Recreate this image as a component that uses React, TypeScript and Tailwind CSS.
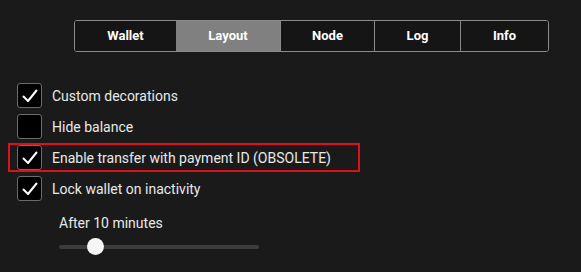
import React from 'react';

const tabs = [
  { label: 'Wallet', w: 'w-[101px]' },
  { label: 'Layout', w: 'w-[104px]', active: true },
  { label: 'Node', w: 'w-[94px]' },
  { label: 'Log', w: 'w-[86px]' },
  { label: 'Info', w: 'w-[88px]' },
];

const options = [
  { label: 'Custom decorations', checked: true },
  { label: 'Hide balance', checked: false },
  { label: 'Enable transfer with payment ID (OBSOLETE)', checked: true, highlight: true },
  { label: 'Lock wallet on inactivity', checked: true },
];

const Check = ({ checked }: { checked: boolean }) => (
  <div className="w-[25px] h-[25px] rounded-[3px] border border-[#6b6b6b] bg-black flex items-center justify-center shrink-0">
    {checked && (
      <svg width="16" height="14" viewBox="0 0 16 14" fill="none">
        <path d="M1.5 7.5 L6 12 L14.5 1.5" stroke="#fff" strokeWidth="2" strokeLinecap="round" strokeLinejoin="round" />
      </svg>
    )}
  </div>
);

const App = () => {
  return (
    <div className="w-[581px] h-[272px] bg-[#1a1a1a] text-[#e9e9e9] overflow-hidden" style={{ fontFamily: 'Roboto, "Liberation Sans", sans-serif' }}>
      {/* Tabs */}
      <div className="pt-[20px] pl-[74px]">
        <div className="flex w-max border border-[#8a8a8a] rounded-[3px] h-[32px] overflow-hidden">
          {tabs.map((t, i) => (
            <div
              key={t.label}
              className={`${t.w} flex items-center justify-center text-[13px] font-bold text-white ${
                t.active ? 'bg-[#808080]' : 'bg-[#151515]'
              } ${i > 1 ? 'border-l border-[#8a8a8a]' : ''}`}
            >
              {t.label}
            </div>
          ))}
        </div>
      </div>

      {/* Options */}
      <div className="mt-[31px] flex flex-col gap-[6px]">
        {options.map((o) => (
          <div
            key={o.label}
            className={`flex items-center gap-[10px] h-[25px] ${
              o.highlight ? 'ml-[10px] w-[348px] outline-2 outline-[#e0101a] pl-[7px]' : 'pl-[17px]'
            }`}
          >
            <Check checked={o.checked} />
            <span className="text-[14px] leading-none">{o.label}</span>
          </div>
        ))}
      </div>

      {/* Timeout */}
      <div className="pl-[59px] mt-[15px]">
        <div className="text-[14px] leading-none">After 10 minutes</div>
        <div className="relative w-[200px] h-[17px] mt-[8px] flex items-center">
          <div className="w-full h-[4px] rounded-full bg-[#3c3c3c]" />
          <div className="absolute left-[28px] top-0 w-[17px] h-[17px] rounded-full bg-[#f5f5f5]" />
        </div>
      </div>
    </div>
  );
};

export default App;
